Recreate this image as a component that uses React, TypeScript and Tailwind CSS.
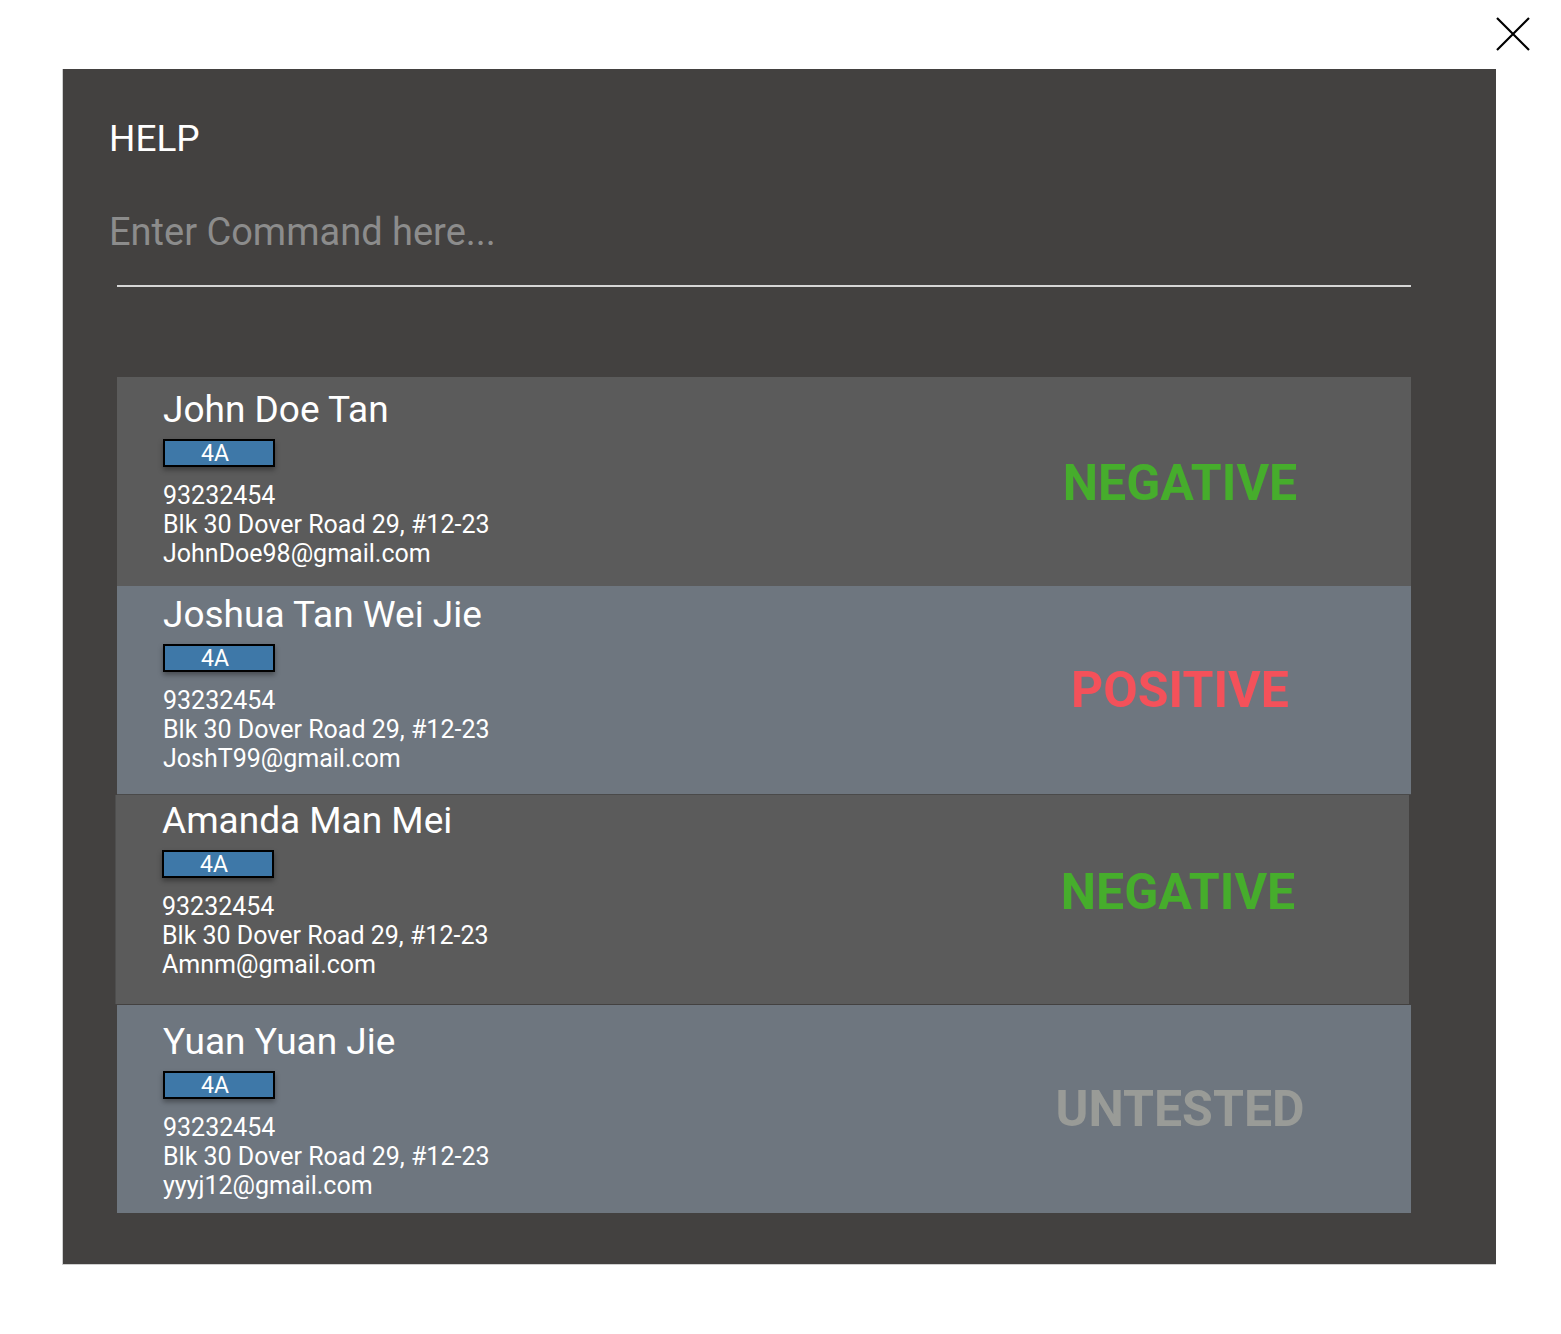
import React from 'react';

interface Person {
  name: string;
  phone: string;
  address: string;
  email: string;
  status: 'NEGATIVE' | 'POSITIVE' | 'UNTESTED';
}

const people: Person[] = [
  { name: 'John Doe Tan', phone: '93232454', address: 'Blk 30 Dover Road 29, #12-23', email: 'JohnDoe98@gmail.com', status: 'NEGATIVE' },
  { name: 'Joshua Tan Wei Jie', phone: '93232454', address: 'Blk 30 Dover Road 29, #12-23', email: 'JoshT99@gmail.com', status: 'POSITIVE' },
  { name: 'Amanda Man Mei', phone: '93232454', address: 'Blk 30 Dover Road 29, #12-23', email: 'Amnm@gmail.com', status: 'NEGATIVE' },
  { name: 'Yuan Yuan Jie', phone: '93232454', address: 'Blk 30 Dover Road 29, #12-23', email: 'yyyj12@gmail.com', status: 'UNTESTED' },
];

const statusColor = {
  NEGATIVE: 'text-[#46ad2c]',
  POSITIVE: 'text-[#f4515a]',
  UNTESTED: 'text-[#999b97]',
};

// per-card tweaks, the mockup's cards are not quite aligned
const cardStyle = [
  { card: 'bg-[#5b5b5b] h-[209px]', body: 'pt-[12px]', status: 'pt-[4px]' },
  { card: 'bg-[#6e767f] h-[209px] border-b border-[#4a4a4a]', body: 'pt-[8px]', status: 'pt-0' },
  { card: 'bg-[#5b5b5b] h-[209px] -ml-[2px] border-l border-[#4e4e4e]', body: 'pt-[5px]', status: 'pb-[14px]' },
  { card: 'bg-[#6e767f] h-[208px] mt-px', body: 'pt-[16px]', status: 'pt-0' },
];

const PersonCard = ({ person, index }: { person: Person; index: number }) => {
  const s = cardStyle[index];
  return (
    <article className={`flex w-[1294px] ${s.card}`}>
      <div className={`flex-1 pl-[46px] ${s.body}`}>
        <h2 className="text-[37px] leading-[42px] text-white">{person.name}</h2>
        <div className="mt-[8px] flex h-[28px] w-[112px] items-center justify-center border-2 border-black bg-[#3e78a8] pr-[8px] text-[23px] leading-none text-white shadow-[0_3px_5px_rgba(0,0,0,0.35)]">
          4A
        </div>
        <div className="mt-[14px] text-[25px] leading-[29px] text-white">
          <p>{person.phone}</p>
          <p>{person.address}</p>
          <p>{person.email}</p>
        </div>
      </div>
      <div className={`mr-[81px] flex w-[300px] items-center justify-center ${s.status}`}>
        <span className={`text-[50px] font-bold ${statusColor[person.status]}`}>{person.status}</span>
      </div>
    </article>
  );
};

export default function App() {
  return (
    <div className="relative h-[1334px] w-[1561px] bg-white font-['Roboto',sans-serif]">
      <button className="absolute right-[31px] top-[17px] h-[34px] w-[34px]" aria-label="close">
        <svg viewBox="0 0 34 34" className="h-full w-full" fill="none" stroke="#000" strokeWidth="2.2">
          <path d="M1 1 L33 33 M33 1 L1 33" />
        </svg>
      </button>
      <div className="absolute left-[62px] top-[69px] h-[1196px] w-[1434px] border-l border-b border-[#cfcfcf] bg-[#434140]">
        <div className="pl-[46px] pt-[49px]">
          <h1 className="text-[37px] leading-[42px] text-white">HELP</h1>
          <p className="mt-[51px] text-[38px] leading-[42px] text-[#8c8c8c]">Enter Command here...</p>
        </div>
        <div className="ml-[54px] mt-[32px] h-[2px] w-[1294px] bg-[#d6d6d6]" />
        <section className="ml-[54px] mt-[90px] flex flex-col">
          {people.map((p, i) => (
            <PersonCard key={p.name} person={p} index={i} />
          ))}
        </section>
      </div>
    </div>
  );
}
